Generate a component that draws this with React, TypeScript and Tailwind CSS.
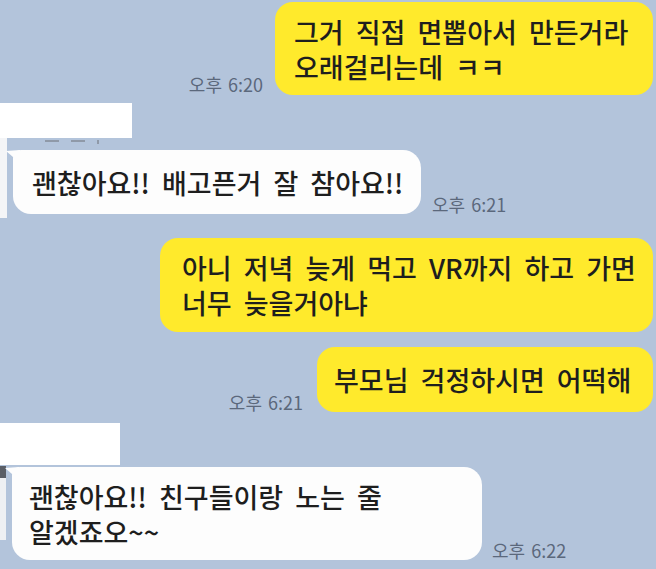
import React from 'react';

const font = "font-['Noto_Sans_CJK_KR','Noto_Sans',sans-serif]";

function Time({ t, className = '' }: { t: string; className?: string }) {
  return (
    <span className={`text-[18px] leading-[20px] text-[#5b687c] whitespace-nowrap [word-spacing:2px] ${className}`}>
      {t}
    </span>
  );
}

function Tail() {
  return (
    <svg className="absolute left-[-7px] top-[0px]" width="14" height="14" viewBox="0 0 14 14">
      <path d="M0 1 L14 0 L14 13 Z" fill="#fdfdfd" />
    </svg>
  );
}

const bubbleText = 'text-[27px] leading-[35px] font-medium text-[#1e1e1e] whitespace-nowrap [word-spacing:6px]';

export default function App() {
  return (
    <div className={`w-[656px] h-[569px] overflow-hidden bg-[#b3c4db] flex flex-col ${font}`}>
      {/* me */}
      <div className="flex justify-end items-end gap-[12px] pr-[3px] pt-[2px]">
        <Time t="오후 6:20" className="mb-[1px]" />
        <div className={`w-[378px] rounded-[18px] bg-[#ffea2c] pl-[19px] pt-[12px] pb-[11px] ${bubbleText}`}>
          그거 직접 면뽑아서 만든거라
          <br />
          오래걸리는데 ㅋㅋ
        </div>
      </div>

      {/* name hidden */}
      <div className="mt-[8px] h-[35px] w-[132px] bg-white" />

      <div className="flex">
        <div className="w-[7px] h-[80px] bg-[#f4f5f7]" />
        <div className="flex flex-col">
          <div className="h-[12px] flex items-start gap-[12px] pl-[38px] pt-[2px]">
            <span className="h-[2px] w-[14px] bg-[#8f99a8]" />
            <span className="h-[2px] w-[14px] bg-[#8f99a8]" />
            <span className="h-[4px] w-[2px] bg-[#8f99a8]" />
          </div>
          <div className="flex items-end gap-[11px] ml-[6px]">
            <div className={`relative w-[408px] rounded-[18px] rounded-tl-[8px] bg-[#fdfdfd] pl-[19px] pt-[15px] pb-[14px] ${bubbleText}`}>
              <Tail />
              괜찮아요!! 배고픈거 잘 참아요!!
            </div>
            <Time t="오후 6:21" />
          </div>
        </div>
      </div>

      {/* me */}
      <div className="mt-[20px] flex justify-end pr-[3px]">
        <div className={`w-[493px] rounded-[18px] bg-[#ffea2c] pl-[22px] pt-[12px] pb-[12px] ${bubbleText}`}>
          아니 저녁 늦게 먹고 VR까지 하고 가면
          <br />
          너무 늦을거아냐
        </div>
      </div>
      <div className="mt-[15px] flex justify-end items-end gap-[14px] pr-[3px]">
        <Time t="오후 6:21" />
        <div className={`w-[336px] rounded-[18px] bg-[#ffea2c] pl-[17px] pt-[15px] pb-[15px] ${bubbleText}`}>
          부모님 걱정하시면 어떡해
        </div>
      </div>

      {/* name hidden */}
      <div className="mt-[11px] h-[42px] w-[120px] bg-white" />

      <div className="flex">
        <div className="w-[6px] flex flex-col">
          <div className="h-[12px] bg-[#5a5e66] mt-[1px]" />
          <div className="h-[62px] bg-[#eef0f3]" />
        </div>
        <div className="flex items-end gap-[10px] ml-[6px] mt-[2px]">
          <div className={`relative w-[470px] rounded-[18px] rounded-tl-[8px] bg-[#fdfdfd] pl-[17px] pt-[12px] pb-[11px] ${bubbleText}`}>
            <Tail />
            괜찮아요!! 친구들이랑 노는 줄
            <br />
            알겠죠오~~
          </div>
          <Time t="오후 6:22" />
        </div>
      </div>
    </div>
  );
}
